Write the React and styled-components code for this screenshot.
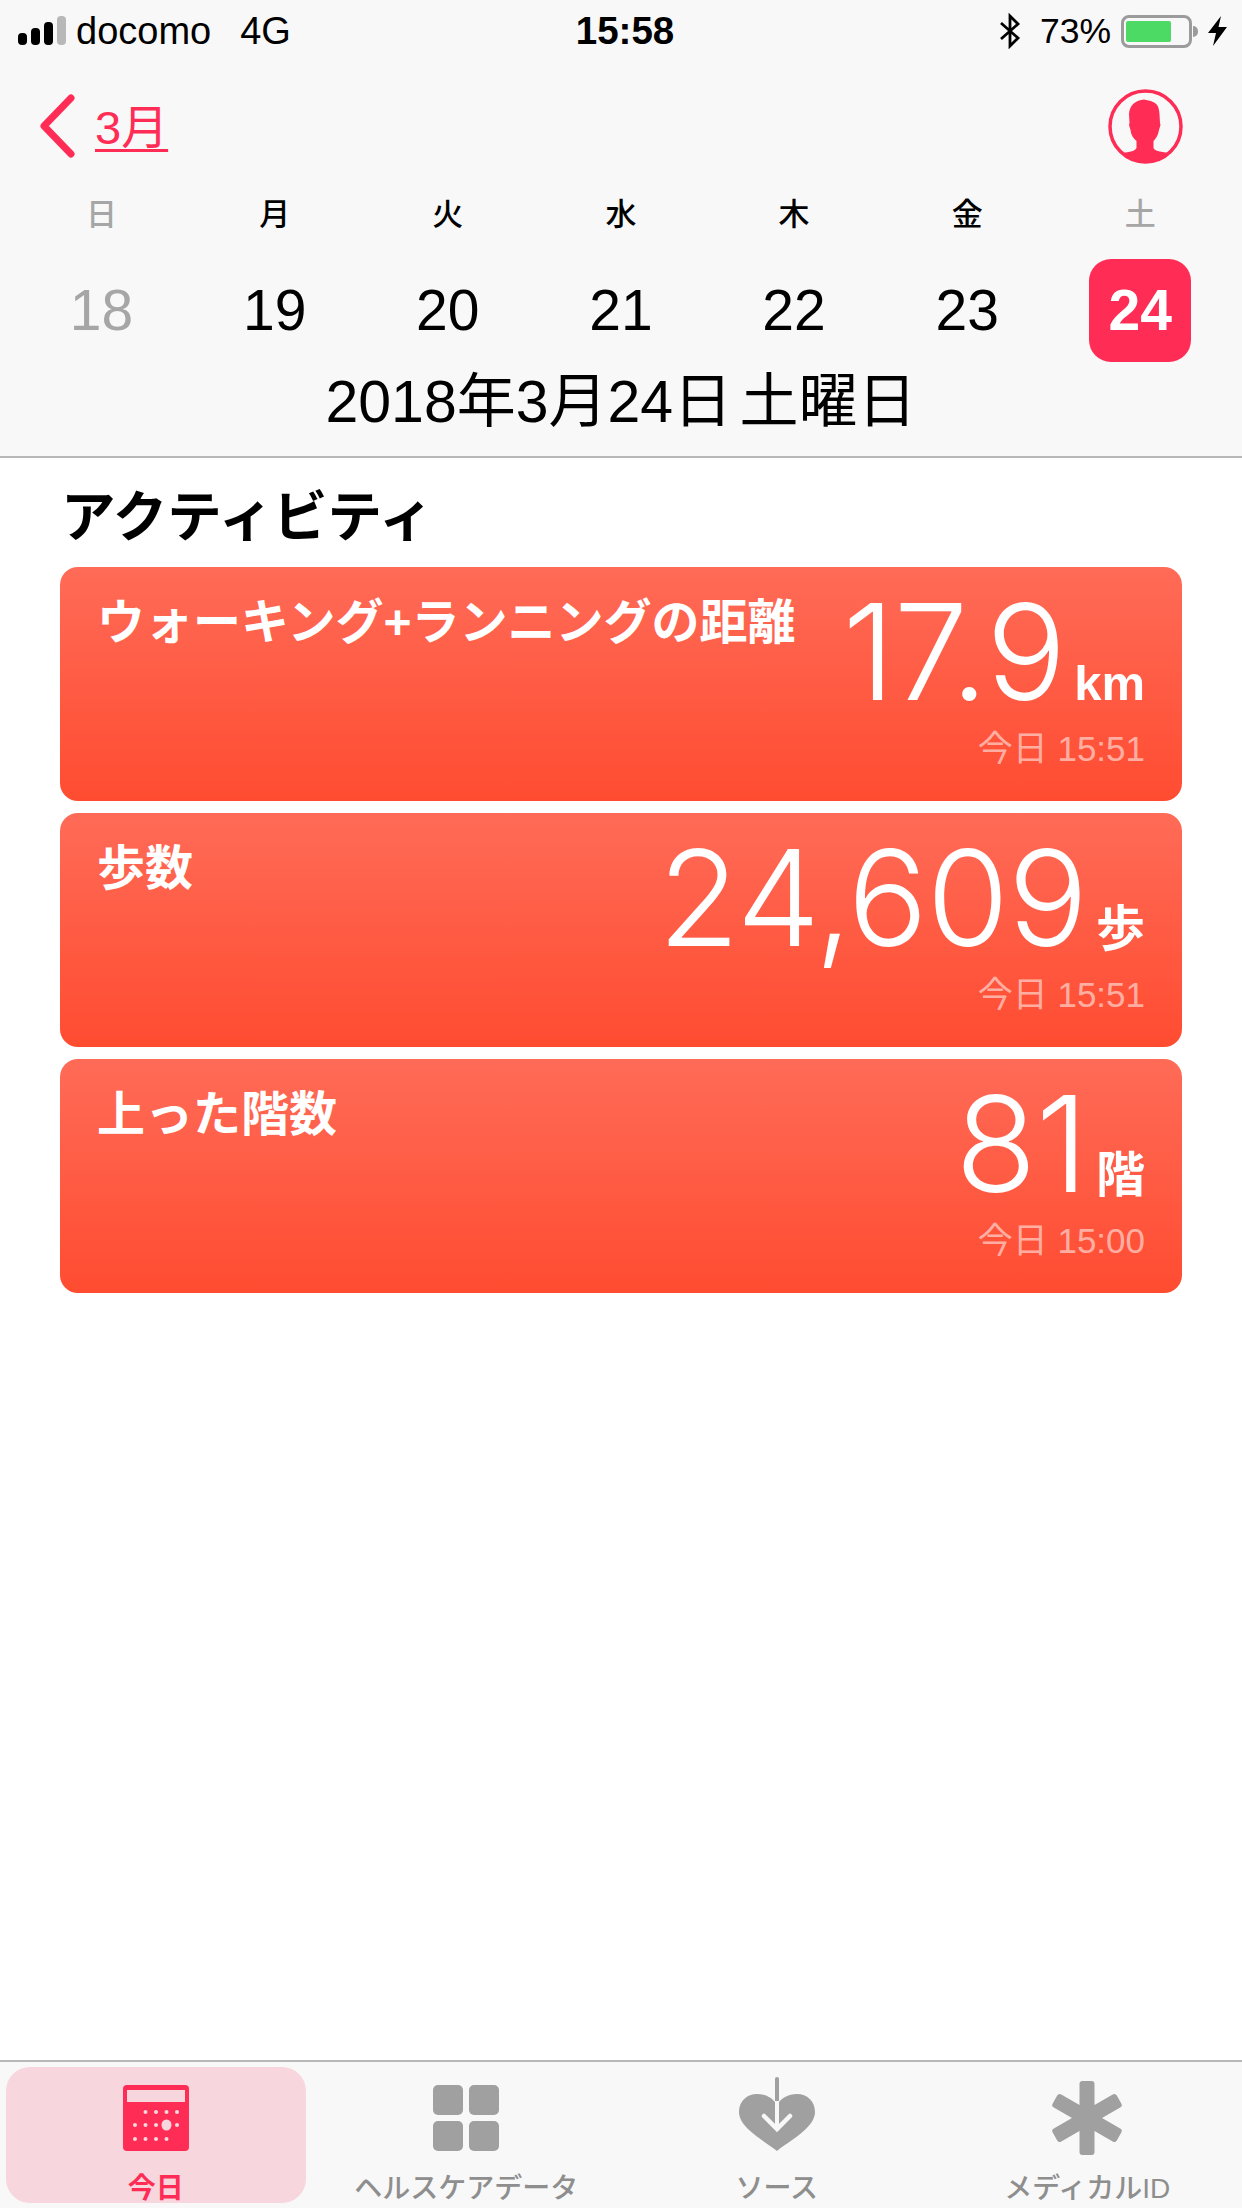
import React from "react";
import styled, { createGlobalStyle } from "styled-components";

const SANS = `"Liberation Sans", "Noto Sans CJK JP", sans-serif`;
const PINK = "#ff2d55";

const Global = createGlobalStyle`
  html, body { margin: 0; padding: 0; background: #fff; }
  #root { width: 1242px; height: 2208px; }
  * { box-sizing: border-box; }
`;

const Page = styled.div`
  width: 1242px;
  height: 2208px;
  display: flex;
  flex-direction: column;
  font-family: ${SANS};
  color: #000;
  overflow: hidden;
`;

const Header = styled.header`
  background: #f8f8f8;
  border-bottom: 2px solid #b8b8b8;
  height: 458px;
  flex: none;
`;

const StatusBar = styled.div`
  height: 62px;
  padding: 0 15px 0 18px;
  display: grid;
  grid-template-columns: 1fr auto 1fr;
  align-items: center;
  font-size: 38px;
  line-height: 62px;
`;

const StatusLeft = styled.div`
  display: flex;
  align-items: center;
`;

const Carrier = styled.span`
  margin-left: 10px;
`;

const Network = styled.span`
  margin-left: 29px;
`;

const Clock = styled.div`
  font-weight: 700;
  font-size: 38.5px;
  margin-left: 5px;
`;

const StatusRight = styled.div`
  display: flex;
  align-items: center;
  justify-content: flex-end;
`;

const Percent = styled.span`
  margin: 0 10px 0 19px;
  font-size: 35.5px;
`;

const Battery = styled.div`
  position: relative;
  width: 71px;
  height: 33px;
  border: 3px solid #9b9b9b;
  border-radius: 8px;
  padding: 3px 2px;
  margin-right: 16px;
  &::after {
    content: "";
    position: absolute;
    right: -9px;
    top: 8px;
    width: 5px;
    height: 11px;
    border-radius: 0 5px 5px 0;
    background: #9b9b9b;
  }
`;

const BatteryFill = styled.div`
  height: 100%;
  background: #4cd964;
  border-radius: 2px;
`;

const NavRow = styled.div`
  height: 128px;
  padding: 0 59px 0 38px;
  display: flex;
  align-items: center;
  justify-content: space-between;
`;

const BackLink = styled.div`
  display: flex;
  align-items: center;
  gap: 19px;
  color: ${PINK};
  font-size: 47px;
`;

const Month = styled.span`
  line-height: 60px;
  margin-top: 3px;
  text-decoration: underline;
  text-decoration-thickness: 3px;
  text-underline-offset: 5px;
`;

const CalendarGrid = styled.div`
  display: grid;
  grid-template-columns: repeat(7, 173.14px);
  padding: 0 15px;
`;

const Weekday = styled.div`
  height: 46px;
  line-height: 43px;
  text-align: center;
  font-size: 31px;
  font-weight: 500;
  font-family: "Noto Sans CJK JP", sans-serif;
  color: ${(p) => (p.$muted ? "#a6a6a6" : "#000")};
`;

const DayCell = styled.div`
  margin-top: 23px;
  height: 103px;
  display: flex;
  align-items: center;
  justify-content: center;
`;

const DayNumber = styled.div`
  width: 102px;
  height: 103px;
  line-height: 103px;
  text-align: center;
  border-radius: 22px;
  font-size: 57px;
  font-weight: ${(p) => (p.$selected ? 700 : 400)};
  color: ${(p) => (p.$selected ? "#fff" : p.$muted ? "#a6a6a6" : "#000")};
  background: ${(p) => (p.$selected ? PINK : "transparent")};
`;

const FullDate = styled.div`
  height: 80px;
  line-height: 80px;
  text-align: center;
  font-size: 59px;
  word-spacing: -9px;
`;

const Main = styled.main`
  flex: 1;
  padding: 30px 60px 0;
  background: #fff;
`;

const SectionTitle = styled.h2`
  margin: 0 0 19px 1px;
  font-size: 54.5px;
  line-height: 60px;
  font-weight: 700;
`;

const CardList = styled.div`
  display: flex;
  flex-direction: column;
  gap: 12px;
`;

const Card = styled.article`
  height: 234px;
  border-radius: 18px;
  padding: 24px 37px 0 38px;
  background: linear-gradient(180deg, #ff6b57 0%, #ff4c31 100%);
  color: #fff;
  display: flex;
  justify-content: space-between;
  align-items: flex-start;
`;

const CardTitle = styled.div`
  margin-top: 3px;
  margin-left: -1px;
  font-size: 48px;
  line-height: 58px;
  font-weight: 700;
  white-space: nowrap;
`;

const Reading = styled.div`
  display: flex;
  flex-direction: column;
  align-items: flex-end;
`;

const ValueRow = styled.div`
  display: flex;
  align-items: baseline;
  gap: 9px;
  height: 120px;
`;

const Value = styled.span`
  font-family: Inter, sans-serif;
  font-weight: 300;
  font-size: 133px;
  line-height: 122px;
  letter-spacing: -1px;
`;

const Unit = styled.span`
  font-size: 49px;
  font-weight: 700;
`;

const Updated = styled.div`
  margin-top: 16px;
  font-size: 35px;
  line-height: 44px;
  color: rgba(255, 255, 255, 0.55);
`;

const TabBar = styled.nav`
  flex: none;
  height: 148px;
  background: #f8f8f8;
  border-top: 2px solid #b8b8b8;
  padding: 5px 0 6px;
  display: grid;
  grid-template-columns: repeat(4, 1fr);
`;

const Tab = styled.div`
  margin: 0 5px 0 6px;
  padding-top: 11px;
  border-radius: 24px;
  display: flex;
  flex-direction: column;
  align-items: center;
  background: ${(p) => (p.$active ? "#f8d6de" : "transparent")};
`;

const TabIcon = styled.svg`
  width: 80px;
  height: 80px;
  overflow: visible;
  flex: none;
`;

const TabLabel = styled.div`
  margin-top: 17px;
  font-size: 28px;
  line-height: 28px;
  font-weight: ${(p) => (p.$active ? 700 : 500)};
  color: ${(p) => (p.$active ? PINK : "#8e8e8e")};
  white-space: nowrap;
`;

const SignalIcon = () => (
  <svg width="48" height="30" viewBox="0 0 48 30">
    <rect x="0" y="17" width="9" height="12" rx="4" fill="#000" />
    <rect x="13" y="12" width="9" height="17" rx="4" fill="#000" />
    <rect x="26" y="6" width="9" height="23" rx="4" fill="#000" />
    <rect x="39" y="0" width="9" height="29" rx="4" fill="#b8b8b8" />
  </svg>
);

const BluetoothIcon = () => (
  <svg width="22" height="36" viewBox="0 0 22 36">
    <path d="M2 10 L19 25 L11 33 V3 L19 11 L2 26" fill="none" stroke="#000" strokeWidth="2.8" />
  </svg>
);

const BoltIcon = () => (
  <svg width="19" height="30" viewBox="0 0 19 30">
    <path d="M13 0 L0 17 H8 L5 30 L19 11 H10.5 Z" fill="#000" />
  </svg>
);

const Chevron = () => (
  <svg width="38" height="64" viewBox="0 0 38 64">
    <path d="M33 4 L6 32 L33 60" fill="none" stroke={PINK} strokeWidth="7" strokeLinecap="round" strokeLinejoin="round" />
  </svg>
);

const Avatar = () => (
  <svg width="75" height="75" viewBox="0 0 75 75">
    <defs>
      <clipPath id="avatar-disc">
        <circle cx="37.5" cy="37.5" r="36" />
      </clipPath>
    </defs>
    <circle cx="37.5" cy="37.5" r="35.5" fill="none" stroke={PINK} strokeWidth="3.5" />
    <path
      clipPath="url(#avatar-disc)"
      d="M36 10.5 C39 11.5 42 11.5 45 13 C50 15 51 19 51.5 25 L52 34 L52.5 36 L51 41 C50 47 47.5 50 45.5 52 L45.5 59 C47 62 50 62.5 62 64 L75 75 H0 L14 64 C25 62.5 26.5 62 28.5 59 L28.5 52 C25 49 23 46 22.5 41 L21 36 L21.5 34 L21 25 C21.5 16 28 11 36 10.5 Z"
      fill={PINK}
    />
  </svg>
);

const CALENDAR_DOTS = [
  [29.5, 34], [40, 34], [50.5, 34], [61, 34],
  [19, 47], [29.5, 47], [40, 47], [61, 47],
  [19, 61], [29.5, 61], [40, 61], [50.5, 61],
];

const CalendarIcon = () => (
  <TabIcon viewBox="0 0 80 80">
    <rect x="7" y="7" width="66" height="66" rx="4" fill={PINK} />
    <rect x="11" y="12" width="58" height="12" fill="#f8d6de" />
    {CALENDAR_DOTS.map(([cx, cy]) => (
      <circle key={`${cx}-${cy}`} cx={cx} cy={cy} r="2" fill="#f8d6de" />
    ))}
    <ellipse cx="50.5" cy="47" rx="5" ry="5.5" fill="#f8d6de" />
  </TabIcon>
);

const GridIcon = () => (
  <TabIcon viewBox="0 0 80 80">
    <rect x="7" y="7" width="30" height="30" rx="5" fill="#a0a0a0" />
    <rect x="43" y="7" width="30" height="30" rx="5" fill="#a0a0a0" />
    <rect x="7" y="43" width="30" height="30" rx="5" fill="#a0a0a0" />
    <rect x="43" y="43" width="30" height="30" rx="5" fill="#a0a0a0" />
  </TabIcon>
);

const HeartIcon = () => (
  <TabIcon viewBox="0 0 80 80">
    <path
      d="M40 73 C28 63 2 50 2 34 C2 23 10 16 20 16 C29 16 36 20 40 27 C44 20 51 16 60 16 C70 16 78 23 78 34 C78 50 52 63 40 73 Z"
      fill="#a0a0a0"
    />
    <path d="M40 1 V23" stroke="#a0a0a0" strokeWidth="4" strokeLinecap="round" />
    <path d="M40 23 V50" stroke="#f8f8f8" strokeWidth="4" />
    <path d="M27 38 L40 51 L53 38" fill="none" stroke="#f8f8f8" strokeWidth="4.5" strokeLinecap="round" />
  </TabIcon>
);

const AsteriskIcon = () => (
  <TabIcon viewBox="0 0 80 80">
    {[0, 60, 120].map((angle) => (
      <rect key={angle} x="32.5" y="3" width="15" height="74" rx="3" fill="#a0a0a0" transform={`rotate(${angle} 40 40)`} />
    ))}
  </TabIcon>
);

const WEEK = [
  { label: "日", day: 18, muted: true },
  { label: "月", day: 19 },
  { label: "火", day: 20 },
  { label: "水", day: 21 },
  { label: "木", day: 22 },
  { label: "金", day: 23 },
  { label: "土", day: 24, muted: true, selected: true },
];

const READINGS = [
  { title: "ウォーキング+ランニングの距離", value: "17.9", unit: "km", time: "今日 15:51" },
  { title: "歩数", value: "24,609", unit: "歩", time: "今日 15:51" },
  { title: "上った階数", value: "81", unit: "階", time: "今日 15:00" },
];

const TABS = [
  { label: "今日", Icon: CalendarIcon, active: true },
  { label: "ヘルスケアデータ", Icon: GridIcon },
  { label: "ソース", Icon: HeartIcon },
  { label: "メディカルID", Icon: AsteriskIcon },
];

export default function App() {
  return (
    <Page>
      <Global />
      <Header>
        <StatusBar>
          <StatusLeft>
            <SignalIcon />
            <Carrier>docomo</Carrier>
            <Network>4G</Network>
          </StatusLeft>
          <Clock>15:58</Clock>
          <StatusRight>
            <BluetoothIcon />
            <Percent>73%</Percent>
            <Battery>
              <BatteryFill style={{ width: "73%" }} />
            </Battery>
            <BoltIcon />
          </StatusRight>
        </StatusBar>
        <NavRow>
          <BackLink>
            <Chevron />
            <Month>3月</Month>
          </BackLink>
          <Avatar />
        </NavRow>
        <CalendarGrid>
          {WEEK.map((d) => (
            <Weekday key={d.label} $muted={d.muted}>{d.label}</Weekday>
          ))}
          {WEEK.map((d) => (
            <DayCell key={d.day}>
              <DayNumber $muted={d.muted} $selected={d.selected}>{d.day}</DayNumber>
            </DayCell>
          ))}
        </CalendarGrid>
        <FullDate>2018年3月24日 土曜日</FullDate>
      </Header>
      <Main>
        <SectionTitle>アクティビティ</SectionTitle>
        <CardList>
          {READINGS.map((r) => (
            <Card key={r.title}>
              <CardTitle>{r.title}</CardTitle>
              <Reading>
                <ValueRow>
                  <Value>{r.value}</Value>
                  <Unit>{r.unit}</Unit>
                </ValueRow>
                <Updated>{r.time}</Updated>
              </Reading>
            </Card>
          ))}
        </CardList>
      </Main>
      <TabBar>
        {TABS.map(({ label, Icon, active }) => (
          <Tab key={label} $active={active}>
            <Icon />
            <TabLabel $active={active}>{label}</TabLabel>
          </Tab>
        ))}
      </TabBar>
    </Page>
  );
}
